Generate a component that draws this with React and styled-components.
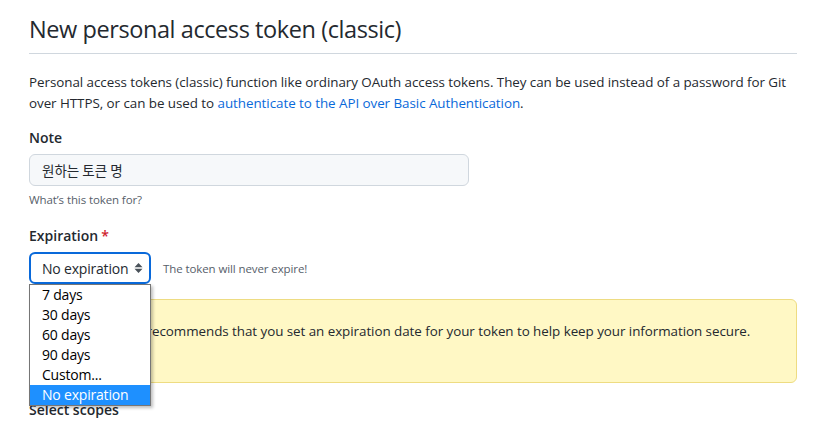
import React from "react";
import styled, { createGlobalStyle } from "styled-components";

const GlobalStyle = createGlobalStyle`
  body {
    margin: 0;
    background: #fff;
    font-family: "Open Sans", "Noto Sans", "Noto Sans CJK KR", sans-serif;
    color: #24292f;
  }
`;

const Page = styled.main`
  width: 768px;
  padding: 11px 0 0 29px;
`;

const Subhead = styled.div`
  border-bottom: 1px solid #d0d7de;
  padding-bottom: 6px;
  margin-bottom: 18px;
`;

const Title = styled.h1`
  margin: 0;
  font-size: 23.5px;
  font-weight: 400;
  line-height: 36px;
  letter-spacing: -0.42px;
`;

const Lead = styled.p`
  margin: 0 0 14px;
  font-size: 13.4px;
  line-height: 21px;
  letter-spacing: -0.05px;
`;

const Link = styled.a`
  color: #0969da;
  text-decoration: none;
`;

const Field = styled.div`
  margin-bottom: ${(p) => p.gap || "16px"};
`;

const Label = styled.label`
  display: block;
  font-size: 14px;
  font-weight: 600;
  line-height: 20px;
  margin-bottom: 6px;
`;

const Required = styled.span`
  color: #cf222e;
  margin-left: 3px;
`;

const TextInput = styled.div`
  width: 440px;
  height: 32px;
  box-sizing: border-box;
  display: flex;
  align-items: center;
  padding: 0 12px;
  font-family: "Noto Sans CJK KR", sans-serif;
  font-size: 13.5px;
  background: #f6f8fa;
  border: 1px solid #d0d7de;
  border-radius: 6px;
`;

const Note = styled.p`
  margin: 6px 0 0;
  font-size: 11.5px;
  color: #57606a;
  letter-spacing: -0.1px;
`;

const SelectRow = styled.div`
  display: flex;
  align-items: center;
  gap: 12px;
  position: relative;
`;

const SelectBox = styled.div`
  width: 122px;
  height: 32px;
  box-sizing: border-box;
  display: flex;
  align-items: center;
  justify-content: space-between;
  padding: 0 6px 0 11px;
  border: 2px solid #0969da;
  border-radius: 6px;
  font-size: 14px;
  letter-spacing: -0.2px;
`;

const Hint = styled.span`
  font-size: 11.5px;
  color: #57606a;
  letter-spacing: -0.1px;
`;

const Options = styled.ul`
  position: absolute;
  left: 0;
  top: 32px;
  width: 122px;
  margin: 0;
  padding: 0;
  list-style: none;
  background: #fff;
  border: 1px solid #767676;
  box-sizing: border-box;
  box-shadow: 2px 2px 3px rgba(0, 0, 0, 0.25);
  z-index: 10;
`;

const Option = styled.li`
  height: 20px;
  line-height: 20px;
  padding-left: 12px;
  font-size: 14px;
  letter-spacing: -0.2px;
  color: ${(p) => (p.active ? "#fff" : "#000")};
  background: ${(p) => (p.active ? "#1e90ff" : "transparent")};
`;

const Flash = styled.div`
  margin-top: 15px;
  padding: 21px 16px 41px;
  background: #fff8c5;
  border: 1px solid #eedc82;
  border-radius: 6px;
  font-size: 13.4px;
  line-height: 20px;
  letter-spacing: -0.05px;
`;

const SectionLabel = styled.h3`
  margin: 17px 0 0;
  font-size: 14px;
  font-weight: 600;
  line-height: 20px;
`;

const Arrows = () => (
  <svg width="9" height="12" viewBox="0 0 9 12">
    <path d="M4.5 1 L8.5 5.2 H0.5 Z M4.5 11 L0.5 6.8 H8.5 Z" fill="#4a525a" />
  </svg>
);

const options = ["7 days", "30 days", "60 days", "90 days", "Custom...", "No expiration"];

export default function App() {
  return (
    <>
      <GlobalStyle />
      <Page>
        <Subhead>
          <Title>New personal access token (classic)</Title>
        </Subhead>
        <Lead>
          Personal access tokens (classic) function like ordinary OAuth access tokens. They can be used instead of a
          password for Git over HTTPS, or can be used to{" "}
          <Link href="#">authenticate to the API over Basic Authentication</Link>.
        </Lead>
        <Field gap="19px">
          <Label>Note</Label>
          <TextInput>원하는 토큰 명</TextInput>
          <Note>What’s this token for?</Note>
        </Field>
        <Field gap="0">
          <Label>
            Expiration<Required>*</Required>
          </Label>
          <SelectRow>
            <SelectBox>
              No expiration
              <Arrows />
            </SelectBox>
            <Hint>The token will never expire!</Hint>
            <Options>
              {options.map((o) => (
                <Option key={o} active={o === "No expiration"}>
                  {o}
                </Option>
              ))}
            </Options>
          </SelectRow>
        </Field>
        <Flash>
          GitHub strongly recommends that you set an expiration date for your token to help keep your information
          secure.
        </Flash>
        <SectionLabel>Select scopes</SectionLabel>
      </Page>
    </>
  );
}
